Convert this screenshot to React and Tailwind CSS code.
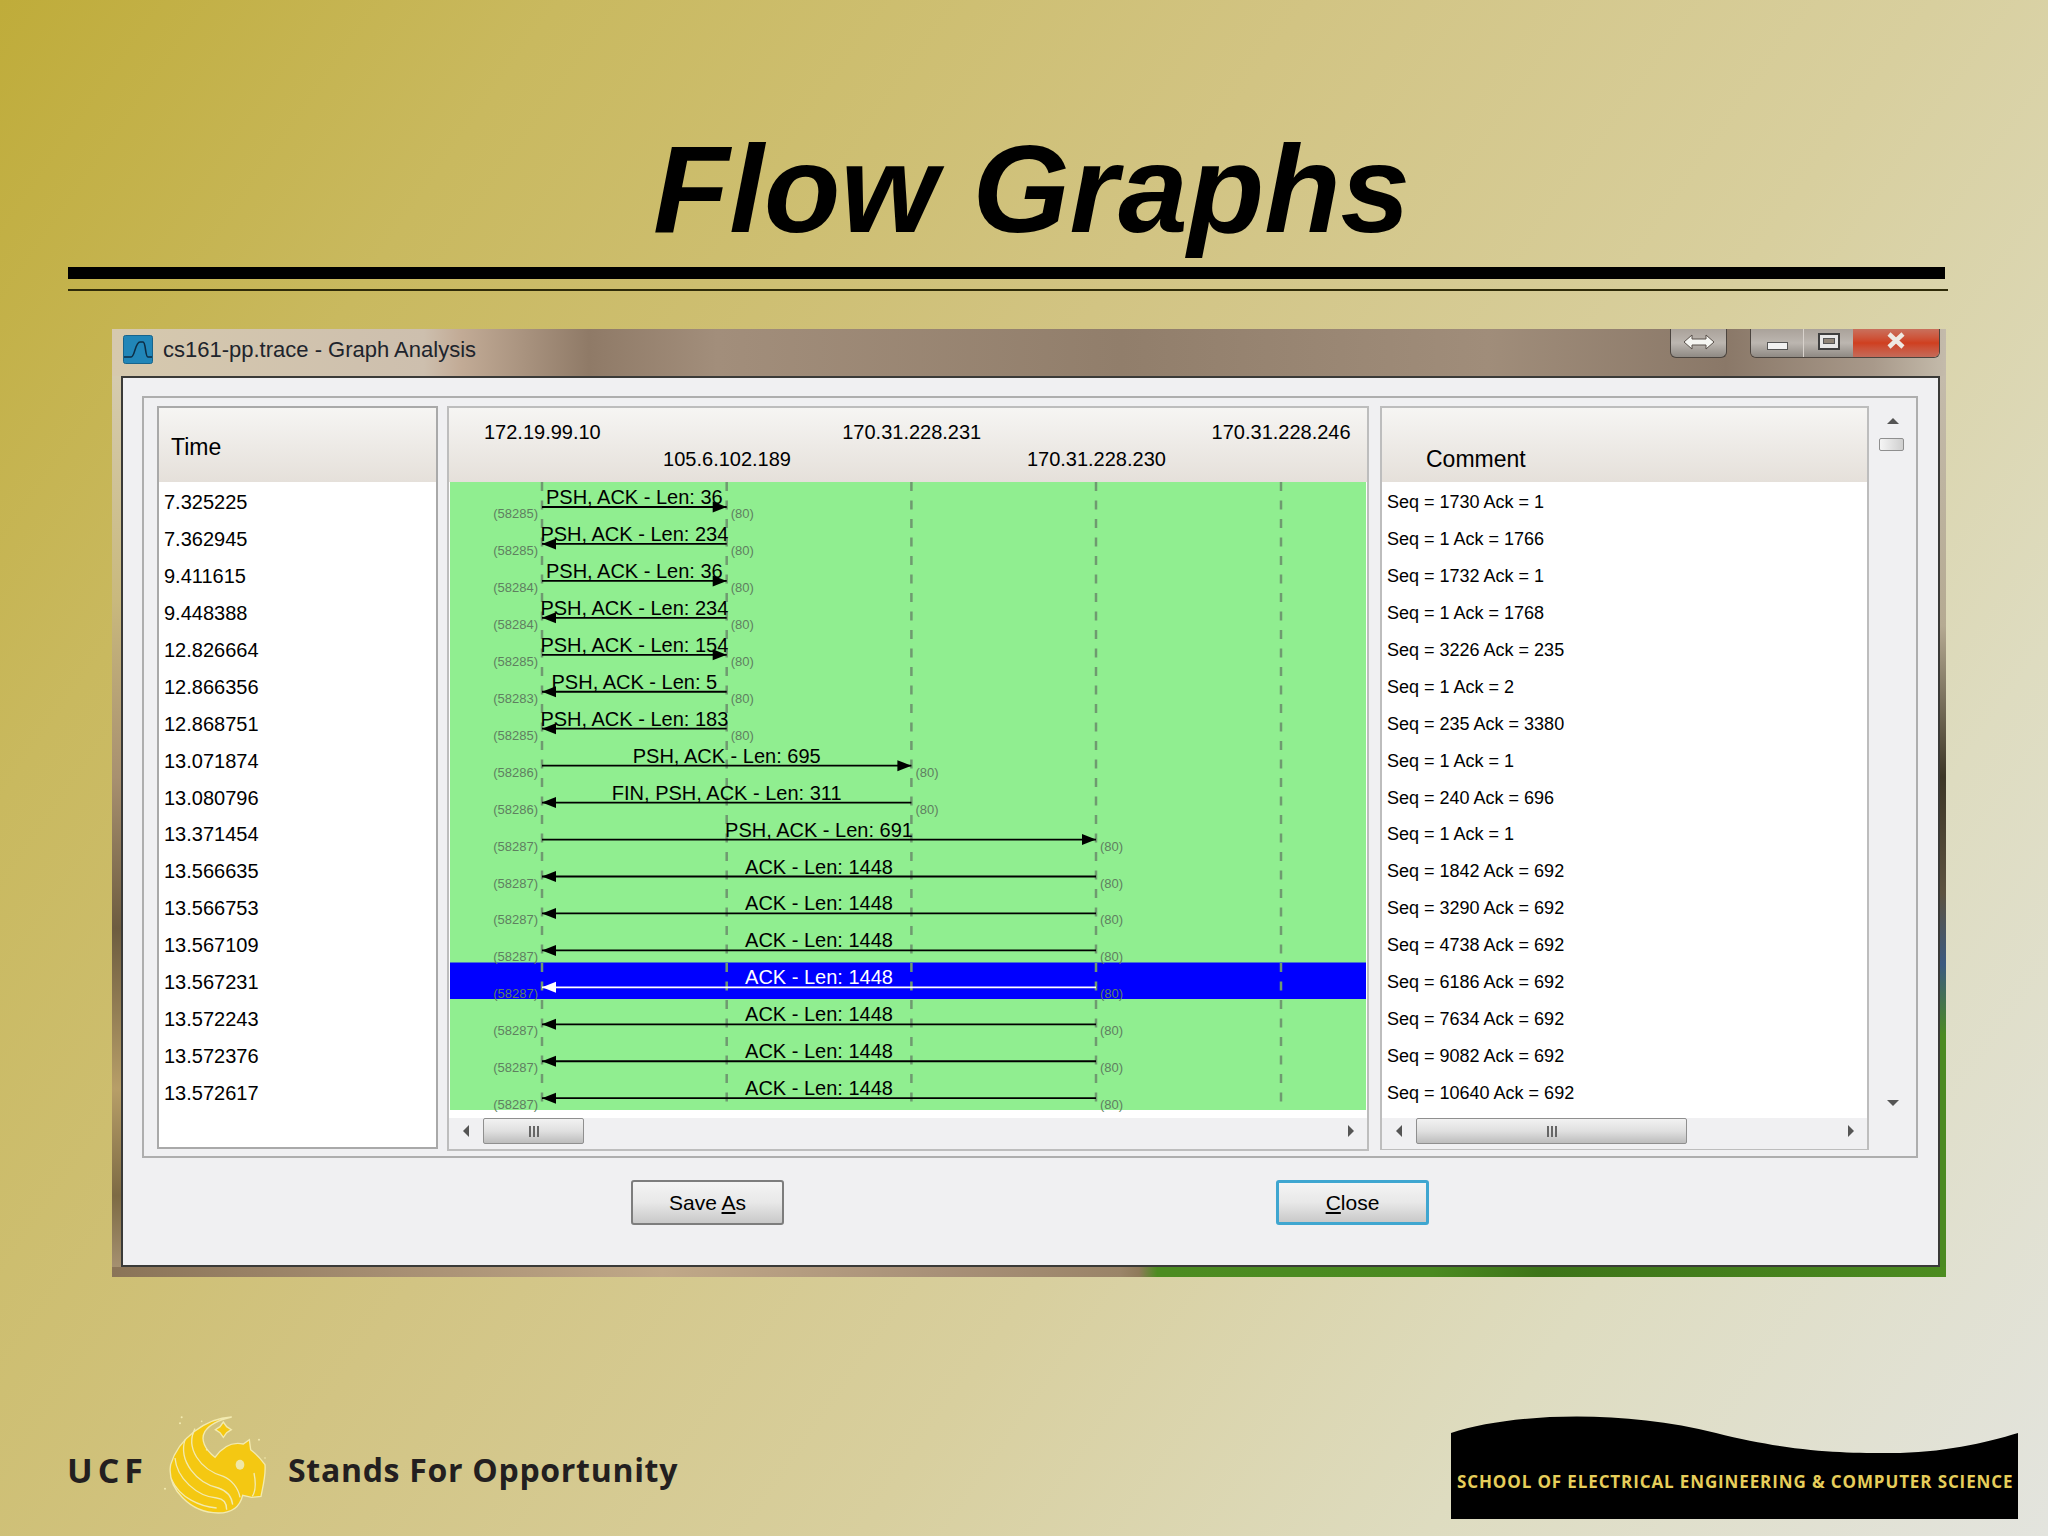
const LIFELINES = [92, 276.7, 461.4, 646, 831];

const HOSTS = [
  { ip: "172.19.99.10", pos: "col-start-1 row-start-1" },
  { ip: "105.6.102.189", pos: "col-start-2 row-start-2" },
  { ip: "170.31.228.231", pos: "col-start-3 row-start-1" },
  { ip: "170.31.228.230", pos: "col-start-4 row-start-2" },
  { ip: "170.31.228.246", pos: "col-start-5 row-start-1" },
];

const ack = { label: "ACK - Len: 1448", from: 3, to: 0, port: 58287 };

const ROWS = [
  { time: "7.325225", comment: "Seq = 1730 Ack = 1", label: "PSH, ACK - Len: 36", from: 0, to: 1, port: 58285 },
  { time: "7.362945", comment: "Seq = 1 Ack = 1766", label: "PSH, ACK - Len: 234", from: 1, to: 0, port: 58285 },
  { time: "9.411615", comment: "Seq = 1732 Ack = 1", label: "PSH, ACK - Len: 36", from: 0, to: 1, port: 58284 },
  { time: "9.448388", comment: "Seq = 1 Ack = 1768", label: "PSH, ACK - Len: 234", from: 1, to: 0, port: 58284 },
  { time: "12.826664", comment: "Seq = 3226 Ack = 235", label: "PSH, ACK - Len: 154", from: 0, to: 1, port: 58285 },
  { time: "12.866356", comment: "Seq = 1 Ack = 2", label: "PSH, ACK - Len: 5", from: 1, to: 0, port: 58283 },
  { time: "12.868751", comment: "Seq = 235 Ack = 3380", label: "PSH, ACK - Len: 183", from: 1, to: 0, port: 58285 },
  { time: "13.071874", comment: "Seq = 1 Ack = 1", label: "PSH, ACK - Len: 695", from: 0, to: 2, port: 58286 },
  { time: "13.080796", comment: "Seq = 240 Ack = 696", label: "FIN, PSH, ACK - Len: 311", from: 2, to: 0, port: 58286 },
  { time: "13.371454", comment: "Seq = 1 Ack = 1", label: "PSH, ACK - Len: 691", from: 0, to: 3, port: 58287 },
  { time: "13.566635", comment: "Seq = 1842 Ack = 692", ...ack },
  { time: "13.566753", comment: "Seq = 3290 Ack = 692", ...ack },
  { time: "13.567109", comment: "Seq = 4738 Ack = 692", ...ack },
  { time: "13.567231", comment: "Seq = 6186 Ack = 692", ...ack, selected: true },
  { time: "13.572243", comment: "Seq = 7634 Ack = 692", ...ack },
  { time: "13.572376", comment: "Seq = 9082 Ack = 692", ...ack },
  { time: "13.572617", comment: "Seq = 10640 Ack = 692", ...ack },
];

function FlowChart() {
  return (
    <svg width="916" height="636" className="block ml-px">
      <rect width="916" height="628" fill="#90ee90" />
      <rect y="480.500" width="916" height="36.5" fill="#0000ff" />
      {LIFELINES.map((x) => (
        <line key={x} x1={x} x2={x} y1="0" y2="628" stroke="#6f9a70" strokeWidth="2.5" strokeDasharray="9 9.5" />
      ))}
      {ROWS.map((r, i) => {
        const y = 25 + i * 36.95;
        const a = LIFELINES[r.from];
        const b = LIFELINES[r.to];
        const dir = b > a ? -1 : 1;
        const color = r.selected ? "#ffffff" : "#000000";
        const right = LIFELINES[Math.max(r.from, r.to)];
        return (
          <g key={r.time}>
            <line x1={a} x2={b} y1={y} y2={y} stroke={color} strokeWidth="1.8" />
            <polygon points={`${b},${y} ${b + dir * 14},${y - 5.5} ${b + dir * 14},${y + 5.5}`} fill={color} />
            <text x={(a + b) / 2} y={y - 3} textAnchor="middle" fontSize="20" fill={color} fontFamily="'Liberation Sans', sans-serif">
              {r.label}
            </text>
            <text x={88} y={y + 11} textAnchor="end" fontSize="13" fill="#5f7f60" fontFamily="'Liberation Sans', sans-serif">
              ({r.port})
            </text>
            <text x={right + 4} y={y + 11} fontSize="13" fill="#5f7f60" fontFamily="'Liberation Sans', sans-serif">
              (80)
            </text>
          </g>
        );
      })}
    </svg>
  );
}

function Arrow({ dir }) {
  const points = {
    left: "7,0 7,12 1,6",
    right: "1,0 1,12 7,6",
    up: "0,7 12,7 6,1",
    down: "0,1 12,1 6,7",
  }[dir];
  const size = dir === "left" || dir === "right" ? { width: 8, height: 12 } : { width: 12, height: 8 };
  return (
    <svg {...size} className="shrink-0">
      <polygon points={points} fill="#555" />
    </svg>
  );
}

function HScrollbar({ thumbClass, gapClass }) {
  return (
    <div className="h-[31px] flex items-start bg-[#f0f0f2]">
      <div className="w-[34px] h-[26px] flex items-center justify-center">
        <Arrow dir="left" />
      </div>
      <div className={`${thumbClass} h-[26px] rounded-[2px] border border-[#8f8f8f] bg-linear-to-b from-[#f2f2f2] via-[#e0e0e0] to-[#bdbdbd] flex items-center justify-center gap-[2px]`}>
        <span className="w-[2px] h-[11px] bg-[#666]" />
        <span className="w-[2px] h-[11px] bg-[#666]" />
        <span className="w-[2px] h-[11px] bg-[#666]" />
      </div>
      <div className={`${gapClass} h-[26px] flex items-center justify-end pr-[12px]`}>
        <Arrow dir="right" />
      </div>
    </div>
  );
}

const headerBg = "bg-linear-to-b from-[#f6f5f3] to-[#e5e0da]";
const captionBtn = "bg-linear-to-b from-[#aaa29a] via-[#bcb6b0] to-[#8f8a84]";

function GraphAnalysisWindow() {
  return (
    <div className="ml-[112px] w-[1834px] h-[948px] flex flex-col">
      {/* glass title bar */}
      <div className="h-[47px] shrink-0 flex items-start bg-[linear-gradient(90deg,#d6c9ae_0%,#cdbfae_17%,#c2ab96_19%,#8f7a67_26%,#a28e7b_33%,#917e6b_55%,#a08d7a_75%,#8a7868_88%,#a8998a_96%,#c4bbab_100%)]">
        <svg width="30" height="29" viewBox="0 0 30 29" className="mt-[6px] ml-[11px] shrink-0">
          <rect x="0.5" y="0.5" width="29" height="28" rx="2" fill="#2186b8" stroke="#17648c" />
          <path d="M1 22h7c4 0 4-15 9-15h3c3 0 2 15 5 15h4" fill="none" stroke="#0d2d44" strokeWidth="1.6" />
        </svg>
        <span className="ml-[10px] mt-[8px] text-[22px] leading-[26px] text-[#20242c]">cs161-pp.trace - Graph Analysis</span>
        <div className="ml-auto mr-[6px] flex items-start">
          <div className={`w-[57px] h-[29px] rounded-b-[6px] border-x border-b border-[#4b443e] ${captionBtn} flex items-center justify-center pb-[2px]`}>
            <svg width="32" height="16" viewBox="0 0 32 16">
              <path d="M1 8l8-7v4h14V1l8 7-8 7v-4H9v4z" fill="#f6f6f2" stroke="#59504a" strokeWidth="1" />
            </svg>
          </div>
          <div className="ml-[23px] w-[190px] h-[29px] rounded-b-[6px] border-x border-b border-[#4b443e] flex overflow-hidden">
            <div className={`w-[53px] ${captionBtn} border-r border-[#d8d2cc] flex items-center justify-center pt-[6px]`}>
              <span className="w-[21px] h-[8px] bg-[#f2f2f2] border border-[#555]" />
            </div>
            <div className={`w-[49px] ${captionBtn} flex items-center justify-center pb-[4px]`}>
              <span className="w-[22px] h-[17px] border-[2px] border-[#3f3f3f] bg-[#e8e8e8] flex items-center justify-center">
                <span className="w-[12px] h-[6px] bg-[#8f8578] border border-[#555]" />
              </span>
            </div>
            <div className="flex-1 bg-linear-to-b from-[#c9705c] via-[#cf3f1f] to-[#c46a58] flex items-center justify-center pb-[6px]">
              <svg width="20" height="17" viewBox="0 0 20 17">
                <path d="M3 2l14 13M17 2L3 15" stroke="#eee9e2" strokeWidth="4.500" />
              </svg>
            </div>
          </div>
        </div>
      </div>

      <div className="flex-1 flex min-h-0">
        <div className="w-[9px] bg-[linear-gradient(180deg,#d5cbb0_0%,#c9b97e_25%,#a89070_45%,#6d5c40_62%,#b79e68_80%,#7d6a44_92%,#a59070_100%)]" />

        {/* client area */}
        <div className="w-[1819px] border-2 border-[#3a3a38] bg-[#f0f0f2] pt-[18px] pl-[19px] flex flex-col">
          <div className="w-[1776px] h-[762px] border-2 border-[#aeaeae] pt-[8px] pl-[13px] flex items-start">
            {/* time column */}
            <div className="w-[281px] h-[743px] border-2 border-[#a9a9a9] bg-white shrink-0">
              <div className={`h-[74px] ${headerBg} flex items-center pl-[12px] pt-[4px] text-[23px] text-black`}>Time</div>
              <div className="pt-[2px]">
                {ROWS.map((r) => (
                  <div key={r.time} className="h-[36.95px] pl-[5px] text-[20px] leading-[37px] text-black">
                    {r.time}
                  </div>
                ))}
              </div>
            </div>

            {/* graph column */}
            <div className="ml-[9px] w-[922px] h-[745px] border-2 border-[#bdbdbd] bg-white shrink-0">
              <div className={`h-[74px] ${headerBg} pt-[11px] pl-px grid grid-cols-[repeat(5,184.7px)] grid-rows-[27px_27px]`}>
                {HOSTS.map((h) => (
                  <div key={h.ip} className={`${h.pos} text-center text-[20px] leading-[27px] text-black`}>
                    {h.ip}
                  </div>
                ))}
              </div>
              <FlowChart />
              <HScrollbar thumbClass="w-[101px]" gapClass="w-[783px]" />
            </div>

            {/* comment column */}
            <div className="ml-[11px] w-[489px] h-[744px] border-2 border-[#bdbdbd] bg-white shrink-0">
              <div className={`h-[74px] ${headerBg} flex items-end pl-[44px] pb-[9px] text-[23px] leading-[28px] text-black`}>Comment</div>
              <div className="h-[636px] pt-[2px]">
                {ROWS.map((r) => (
                  <div key={r.time} className="h-[36.95px] pl-[5px] text-[18px] leading-[37px] text-black">
                    {r.comment}
                  </div>
                ))}
              </div>
              <HScrollbar thumbClass="w-[271px]" gapClass="w-[180px]" />
            </div>

            {/* vertical scrollbar */}
            <div className="ml-[8px] w-[28px] h-[704px] flex flex-col items-center">
              <div className="h-[30px] flex items-center pl-[3px]">
                <Arrow dir="up" />
              </div>
              <div className="w-[25px] h-[13px] mt-[2px] rounded-[2px] border border-[#8f8f8f] bg-linear-to-r from-[#f5f5f5] to-[#cfcfcf]" />
              <div className="mt-auto pl-[3px] pb-[3px]">
                <Arrow dir="down" />
              </div>
            </div>
          </div>

          {/* dialog buttons */}
          <div className="mt-[22px] ml-[489px] flex">
            <button className="w-[153px] h-[45px] rounded-[3px] border-2 border-[#7d7d7d] bg-linear-to-b from-[#f4f4f4] via-[#e8e8e8] to-[#c9c9c9] text-[21px] text-black">
              Save <u>A</u>s
            </button>
            <button className="ml-[492px] w-[153px] h-[45px] rounded-[3px] border-[3px] border-[#3fa6d0] bg-linear-to-b from-[#f4f4f4] via-[#e8e8e8] to-[#c9c9c9] text-[21px] text-black">
              <u>C</u>lose
            </button>
          </div>
        </div>

        <div className="w-[6px] bg-[linear-gradient(180deg,#c4bbab_0%,#b5aa92_28%,#3d3626_45%,#5c5240_58%,#3c5a80_66%,#4b8a22_74%,#4b8a22_100%)]" />
      </div>

      <div className="h-[10px] shrink-0 bg-[linear-gradient(90deg,#8a7458_0%,#a68e72_15%,#c0a888_30%,#a89078_45%,#9a8468_55%,#8f7a5a_56%,#4c8c20_57%,#4a8a20_72%,#3d7418_78%,#4c8c20_100%)]" />
    </div>
  );
}

function UcfLogo() {
  return (
    <svg width="115" height="115" viewBox="0 0 345 345" className="shrink-0">
      <path
        d="M215 27C140 30 55 90 32 170C20 240 90 315 175 315C215 315 240 295 248 262L275 268L303 265C310 230 318 200 315 170C300 150 285 135 272 125L268 95L250 108C215 100 185 120 165 148C135 125 120 95 135 70C150 48 180 35 215 27Z"
        fill="#f4c812"
        stroke="#f2eab0"
        strokeWidth="4"
      />
      <g fill="none" stroke="#f2eab0" strokeWidth="4">
        <path d="M105 62C75 120 120 185 190 205C215 215 235 240 240 268" />
        <path d="M75 95C55 160 110 225 175 240C200 248 215 265 218 290" />
        <path d="M45 150C50 210 110 265 170 270C190 272 200 285 200 305" />
        <path d="M35 215C60 270 120 295 170 300" />
        <path d="M282 195C287 220 287 250 277 265" />
      </g>
      <path d="M190 42l10 14 14 9-14 9-10 14-10-14-14-9 14-9z" fill="#f4c812" stroke="#f2eab0" strokeWidth="4" />
      <ellipse cx="240" cy="170" rx="13" ry="15" fill="#efe7a8" />
      <g fill="#f2eab0">
        <circle cx="65" cy="28" r="3" />
        <circle cx="60" cy="46" r="3" />
        <circle cx="125" cy="40" r="2.500" />
        <circle cx="297" cy="95" r="3" />
        <circle cx="315" cy="150" r="2.500" />
        <circle cx="15" cy="242" r="3" />
        <circle cx="140" cy="125" r="2.500" />
      </g>
    </svg>
  );
}

export default function App() {
  return (
    <div className="w-[2048px] h-[1536px] overflow-hidden flex flex-col font-['Liberation_Sans',sans-serif] bg-[linear-gradient(125deg,#bfac3a_0%,#c9b95f_18%,#d2c483_42%,#d8cf9e_62%,#dedcc0_80%,#e3e4de_100%)]">
      <h1 className="pt-[124px] h-[254px] shrink-0 text-center pl-[15px] text-[125px] leading-[130px] font-bold italic text-black">Flow Graphs</h1>

      <div className="mt-[13px] ml-[68px] w-[1877px] h-[12px] bg-black shrink-0" />
      <div className="mt-[10px] ml-[68px] w-[1880px] h-[2px] bg-[#2f2b08] shrink-0" />

      <div className="mt-[38px]">
        <GraphAnalysisWindow />
      </div>

      {/* footer logos */}
      <div className="mt-auto pb-[13px] pl-[67px] pr-[30px] flex items-end justify-between">
        <div className="flex items-center font-['Open_Sans',sans-serif] font-bold text-[#231f20]">
          <span className="w-[93px] pt-[9px] text-[34px] tracking-[5px]">UCF</span>
          <UcfLogo />
          <span className="ml-[13px] pt-[9px] text-[32px] tracking-[0.7px]">Stands For Opportunity</span>
        </div>
        <div className="relative mb-[4px] w-[567px] h-[104px]">
          <svg width="567" height="104" viewBox="0 0 567 104" className="block">
            <path d="M0 18C60-2 170-6 265 18c80 20 130 20 175 20 50 0 95-10 127-20v86H0z" fill="#000" />
          </svg>
          <span className="absolute left-[6px] top-[55px] font-['Open_Sans',sans-serif] font-bold text-[17px] leading-[24px] tracking-[0.88px] whitespace-nowrap text-[#e6ce5a]">
            SCHOOL OF ELECTRICAL ENGINEERING &amp; COMPUTER SCIENCE
          </span>
        </div>
      </div>
    </div>
  );
}
